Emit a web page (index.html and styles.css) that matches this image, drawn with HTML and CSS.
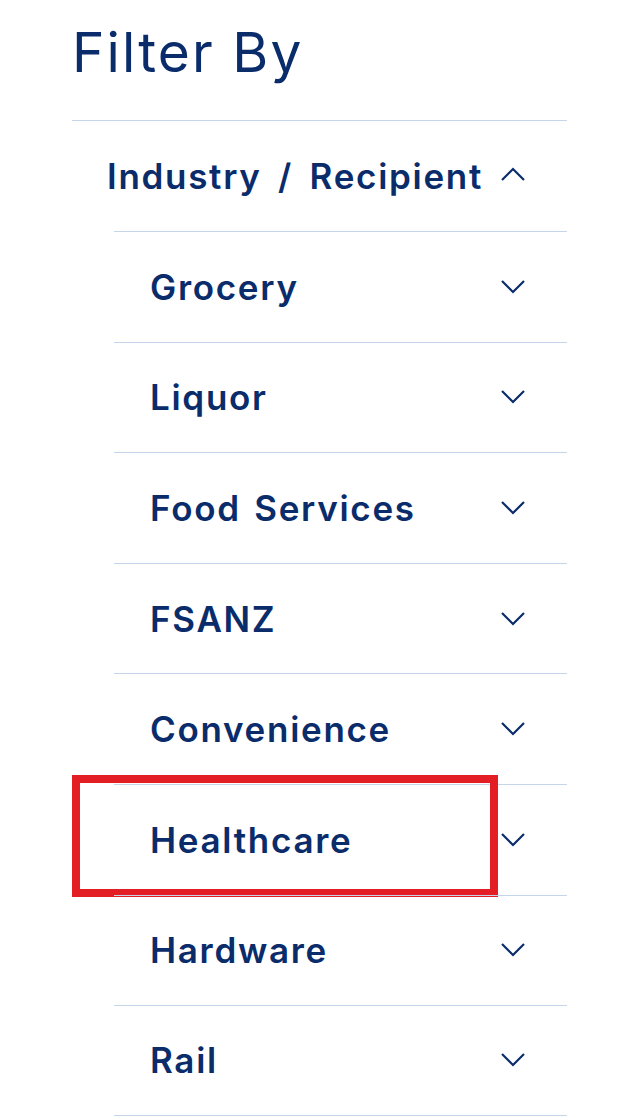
FILE: index.html
```html
<!DOCTYPE html>
<html lang="en">
<head>
  <meta charset="UTF-8">
  <meta name="viewport" content="width=device-width, initial-scale=1.0">
  <title>Filter By</title>
  <link rel="stylesheet" href="styles.css">
</head>
<body>
  <div class="filter">
    <h1 class="filter-title">Filter By</h1>
    <div class="group">
      <div class="group-head">
        <span>Industry / Recipient</span>
        <svg class="chev" viewBox="0 0 24 14"><polyline points="1,13 12,2 23,13"/></svg>
      </div>
      <div class="group-list">
        <div class="item"><span>Grocery</span><svg class="chev" viewBox="0 0 24 14"><polyline points="1,1 12,12 23,1"/></svg></div>
        <div class="item"><span>Liquor</span><svg class="chev" viewBox="0 0 24 14"><polyline points="1,1 12,12 23,1"/></svg></div>
        <div class="item"><span>Food Services</span><svg class="chev" viewBox="0 0 24 14"><polyline points="1,1 12,12 23,1"/></svg></div>
        <div class="item"><span>FSANZ</span><svg class="chev" viewBox="0 0 24 14"><polyline points="1,1 12,12 23,1"/></svg></div>
        <div class="item"><span>Convenience</span><svg class="chev" viewBox="0 0 24 14"><polyline points="1,1 12,12 23,1"/></svg></div>
        <div class="item highlighted"><span>Healthcare</span><svg class="chev" viewBox="0 0 24 14"><polyline points="1,1 12,12 23,1"/></svg></div>
        <div class="item"><span>Hardware</span><svg class="chev" viewBox="0 0 24 14"><polyline points="1,1 12,12 23,1"/></svg></div>
        <div class="item"><span>Rail</span><svg class="chev" viewBox="0 0 24 14"><polyline points="1,1 12,12 23,1"/></svg></div>
      </div>
    </div>
  </div>
</body>
</html>
```

FILE: styles.css
```css
*, *::after {
  box-sizing: border-box;
}
body {
  margin: 0;
  background: #fff;
  font-family: Inter, "Open Sans", Arial, sans-serif;
  color: #0a2c6b;
}

.filter {
  width: 567px;
  padding-left: 72px;
}
.filter-title {
  margin: 0;
  padding: 22px 0 0 0;
  height: 120px;
  font-size: 55px;
  font-weight: 400;
  line-height: 60px;
  letter-spacing: 2.1px;
}

.group {
  border-top: 1px solid #c5d6ea;
}
.group-head {
  height: 110px;
  display: flex;
  align-items: center;
  justify-content: space-between;
  padding: 0 42px 0 35px;
  font-size: 35px;
  font-weight: 600;
  letter-spacing: 1.7px;
  word-spacing: 6px;
}
.group-head .chev {
  margin-top: -4px;
}

.group-list {
  margin-left: 42px;
}
.item {
  position: relative;
  height: 110.6px;
  border-top: 1px solid #c5d6ea;
  display: flex;
  align-items: center;
  justify-content: space-between;
  padding: 0 42px 0 36px;
  font-size: 35px;
  font-weight: 600;
  letter-spacing: 1.7px;
  word-spacing: 3px;
}
.item:last-child {
  border-bottom: 1px solid #c5d6ea;
}

.chev {
  width: 24px;
  height: 14px;
  fill: none;
  stroke: #0a2c6b;
  stroke-width: 2.2;
}

.highlighted::after {
  content: "";
  position: absolute;
  left: -42px;
  top: -10px;
  width: 426px;
  height: 122px;
  border: 8px solid #e41e25;
}
```
